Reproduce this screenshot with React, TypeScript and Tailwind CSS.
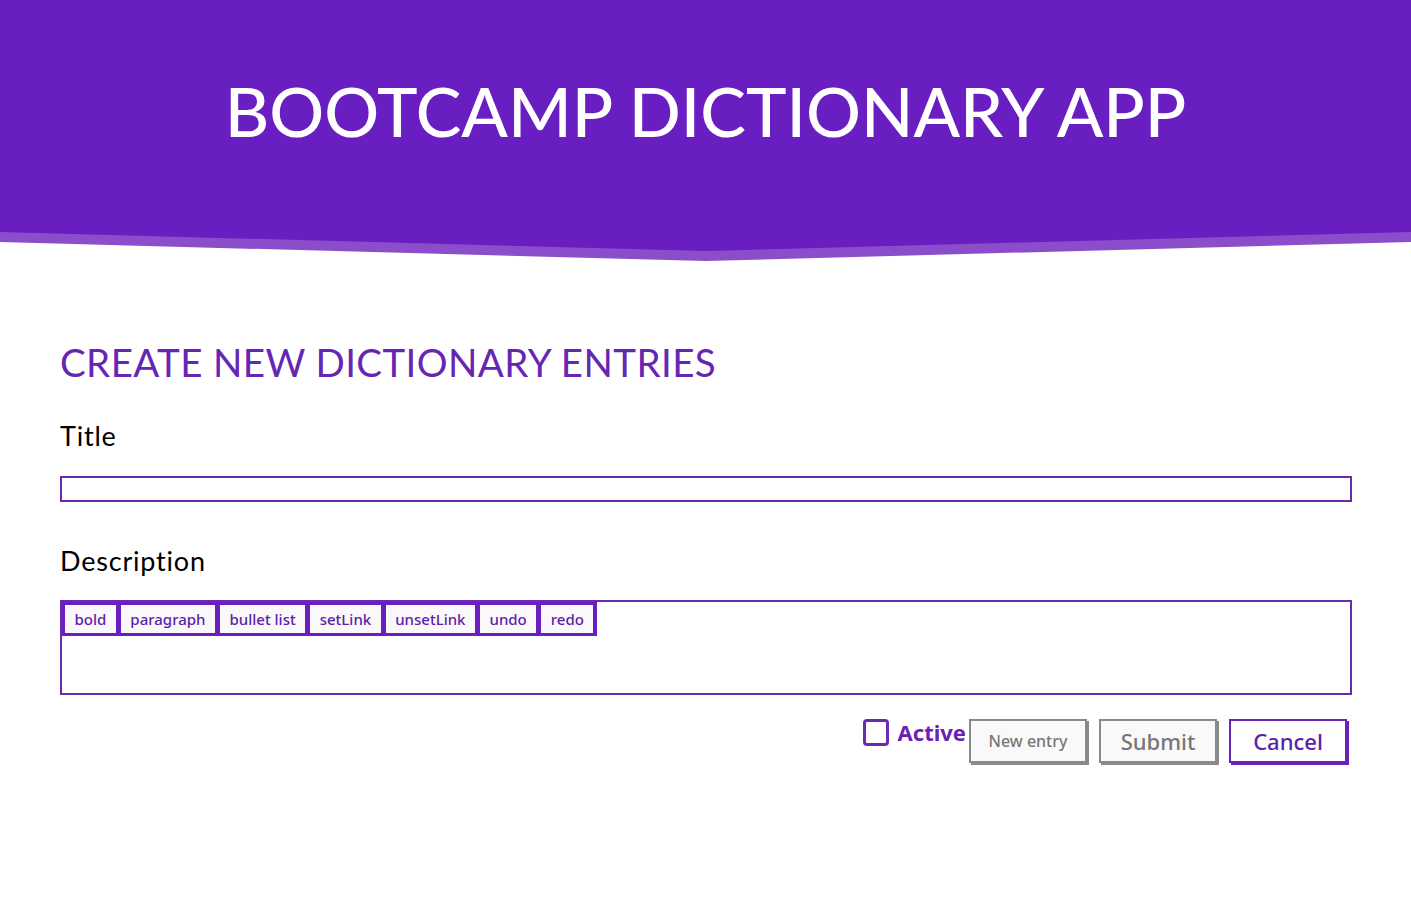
import React, { useState } from 'react';

const tools = ["bold", "paragraph", "bullet list", "setLink", "unsetLink", "undo", "redo"];

const App: React.FC = () => {
    const [active, setActive] = useState<boolean>(false)
    const [title, setTitle] = useState<string>("")

    return (
        <div className="min-h-[923px] bg-white font-['Open_Sans',sans-serif]">
            <header className="relative">
                <div className="bg-[#691ec2] h-[232px] flex justify-center pt-[71px]">
                    <h1 className="text-white text-[68.5px] leading-[80px] font-['Lato',sans-serif] font-medium">
                        BOOTCAMP DICTIONARY APP
                    </h1>
                </div>
                <svg className="block w-full h-[30px]" viewBox="0 0 1411 30" preserveAspectRatio="none">
                    <polygon points="0,0 1411,0 1411,10 706,29 0,10" fill="#8c4dcb" />
                    <polygon points="0,0 1411,0 706,19" fill="#691ec2" />
                </svg>
            </header>

            <main className="px-[60px] pt-[78px]">
                <h2 className="text-[#6626b3] text-[38.5px] leading-[44px] tracking-[0.4px] font-['Lato',sans-serif]">
                    CREATE NEW DICTIONARY ENTRIES
                </h2>

                <label className="block mt-[37px] text-[27px] leading-[30px] tracking-[0.8px] text-black font-['Lato',sans-serif]">Title</label>
                <input
                    type="text"
                    value={title}
                    onChange={(e) => setTitle(e.target.value)}
                    className="mt-[25px] block w-[1292px] h-[26px] border-2 border-[#6a2bb0] outline-none px-1"
                />

                <label className="block mt-[44px] text-[27px] leading-[30px] tracking-[0.8px] text-black font-['Lato',sans-serif]">Description</label>
                <div className="mt-[24px] w-[1292px] h-[95px] border-2 border-[#6a2bb0]">
                    <div className="inline-flex gap-[5px] bg-[#6a1ec2] p-[3px] pr-[4px]">
                        {tools.map((t) => (
                            <button
                                key={t}
                                type="button"
                                className="bg-[#fbf8fb] text-[#5a22a8] text-[15px] leading-[28px] px-[9.5px] font-medium font-['Noto_Sans',sans-serif]"
                            >
                                {t}
                            </button>
                        ))}
                    </div>
                </div>

                <div className="w-[1292px] flex justify-end items-start mt-[22px] pr-[5px]">
                    <label className="flex items-center gap-[9px] mt-[1px] cursor-pointer">
                        <span
                            onClick={() => setActive(!active)}
                            className="w-[26px] h-[27px] border-[3px] border-[#6a2bb0] rounded-[4px] bg-white"
                        />
                        <span className="text-[#6a22b5] text-[22px] font-bold leading-[28px] font-['Noto_Sans',sans-serif]">Active</span>
                    </label>
                    <button className="ml-[3px] mt-[2px] w-[118px] h-[44px] border-2 border-[#8a8a8a] shadow-[2px_2px_0_#8a8a8a] bg-[#faf9fa] text-[#777] text-[16px] font-medium font-['Noto_Sans',sans-serif]">
                        New entry
                    </button>
                    <button className="ml-[12px] mt-[2px] w-[118px] h-[44px] border-2 border-[#8a8a8a] shadow-[2px_2px_0_#8a8a8a] bg-[#faf9fa] text-[#777] text-[22px] font-medium font-['Noto_Sans',sans-serif]">
                        Submit
                    </button>
                    <button className="ml-[12px] mt-[2px] w-[118px] h-[44px] border-2 border-[#6a22b5] shadow-[2px_2px_0_#6a22b5] bg-white text-[#5a22a8] text-[22px] font-medium font-['Noto_Sans',sans-serif]">
                        Cancel
                    </button>
                </div>
            </main>
        </div>
    )
}

export default App
